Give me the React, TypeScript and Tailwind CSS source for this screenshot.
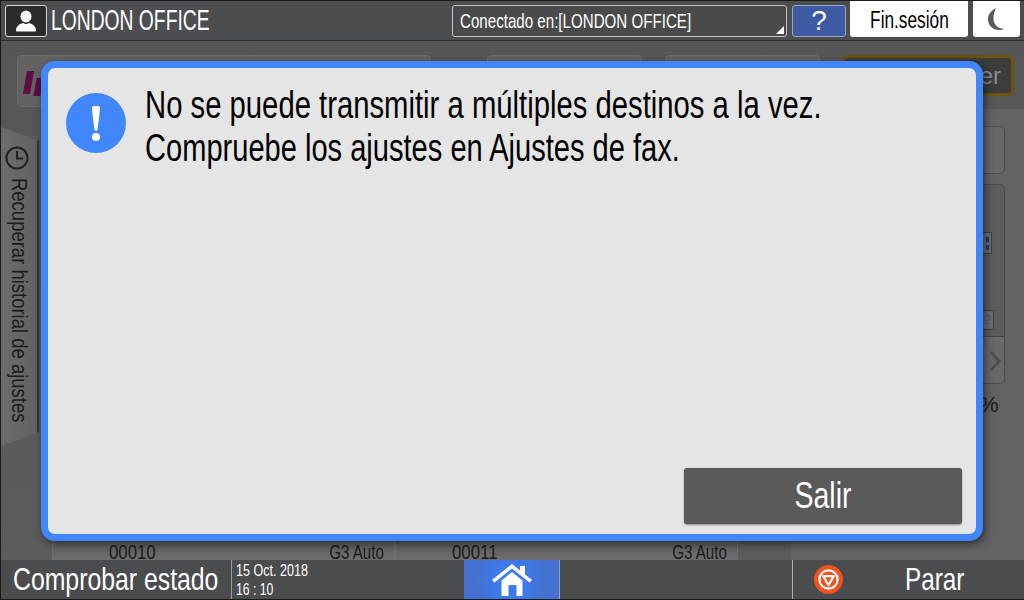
import React from "react";

const font = { fontFamily: '"Liberation Sans", Arial, sans-serif' };

function Ghost({ name, mode }: { name: string; mode: string }) {
  return (
    <div className="relative w-[343px] h-[28px] border-x border-[#6e6e6e] flex justify-between pl-[56px] pr-[10px] text-[21px] leading-[24px] text-[#1c1c1c] overflow-hidden bg-gradient-to-b from-[#565656] to-[#6e6e6e]">
      <div className="absolute left-[20px] top-0 w-[24px] h-[5px] bg-[#4a1030]" />
      <span className="inline-block origin-left scale-x-[0.8] pt-[8px]">{name}</span>
      <span className="inline-block origin-right scale-x-[0.72] pt-[8px]">{mode}</span>
    </div>
  );
}

export default function App() {
  return (
    <div style={font} className="relative w-[1024px] h-[600px] overflow-hidden bg-[#575757] flex flex-col border-y border-l border-[#1a1a1a]">
      {/* Header */}
      <header className="h-[40px] shrink-0 bg-[#4c4d4f] border-b border-[#2e2e2e] flex items-center pl-[4px] pr-[4px] relative">
        <div className="w-[42px] h-[32px] rounded-[3px] border border-[#d8d8d8] bg-[#2b2b2b] flex items-center justify-center">
          <svg viewBox="0 0 24 24" className="w-[24px] h-[24px]" fill="#fff">
            <ellipse cx="12" cy="7.500" rx="5.500" ry="6" />
            <path d="M2 21.500c0-4 3-6.500 7-7.500 2 1.200 4 1.200 6 0 4 1 7 3.500 7 7.500 0 .5-.4 1-1 1H3c-.6 0-1-.5-1-1z" />
          </svg>
        </div>
        <span className="ml-[4px] -mt-[2px] text-[29px] leading-[32px] text-white inline-block origin-left scale-x-[0.665] whitespace-nowrap">LONDON OFFICE</span>
        <div className="flex-1" />
        <div className="relative w-[335px] h-[32px] rounded-[3px] border border-[#c4c4c4] bg-[#4a4a4a] flex items-center pl-[7px]">
          <span className="text-[21px] text-white inline-block origin-left scale-x-[0.72] whitespace-nowrap">Conectado en:[LONDON OFFICE]</span>
          <div className="absolute right-[2px] bottom-[2px] w-0 h-0 border-l-[8px] border-l-transparent border-b-[8px] border-b-white" />
        </div>
        <div className="ml-[5px] w-[54px] h-[32px] rounded-[3px] border border-[#9aa6c4] bg-[#3d5aa3] flex items-center justify-center text-[28px] text-white">?</div>
        <div className="ml-[4px] w-[118px] h-[36px] -mt-[4px] pt-[4px] rounded-b-[3px] bg-white flex items-center justify-center text-[23px] text-black">
          <span className="inline-block scale-x-[0.75] whitespace-nowrap">Fin.sesión</span>
        </div>
        <div className="ml-[5px] w-[47px] h-[36px] -mt-[4px] rounded-b-[3px] bg-white flex items-center justify-center">
          <svg viewBox="0 0 16 22" className="w-[16px] h-[22px] -ml-[1px]" fill="#5a5a5a">
            <path d="M8 0C3 2.500 0 6.500 0 11.500 0 17.500 5 22 11 22c2 0 4-.4 5-1.200C10 21 5.500 16.500 5.500 10.500 5.500 6.500 6.500 3 8 0z" />
          </svg>
        </div>
      </header>

      {/* Dimmed underlying screen */}
      <main className="relative flex-1 min-h-0 bg-gradient-to-b from-[#565656] to-[#5c5c5c]">
        <div className="absolute left-[16px] top-[14px] w-[414px] h-[52px] rounded-[4px] border border-[#6a6a6a] bg-[#626262] overflow-hidden">
          <div className="absolute left-[7px] top-[15px] w-[7px] h-[23px] bg-[#5e0d45] skew-x-[-10deg]" />
          <div className="absolute left-[17px] top-[22px] w-[7px] h-[18px] bg-[#5e0d45] skew-x-[-10deg]" />
        </div>
        <div className="absolute left-[486px] top-[14px] w-[155px] h-[52px] rounded-[4px] border border-[#6a6a6a] bg-[#626262]" />
        <div className="absolute left-[664px] top-[14px] w-[155px] h-[52px] rounded-[4px] border border-[#6a6a6a] bg-[#626262]" />
        <div className="absolute left-[841px] top-[14px] w-[172px] h-[41px] rounded-[6px] border-[3px] border-[#6b5410] bg-[#3c3c3c] flex items-center justify-end pr-[10px] text-[24px] text-[#8a8a8a]">er</div>

        <div className="absolute left-[790px] top-[68px] right-0 bottom-0 bg-[#636363]" />
        <div className="absolute left-[960px] top-[85px] w-[44px] h-[48px] rounded-[5px] border border-[#4c4c4c] bg-[#686868]" />
        <div className="absolute left-[960px] top-[143px] w-[44px] h-[200px] rounded-[5px] border border-[#4c4c4c] bg-[#5c5c5c] overflow-hidden">
          <div className="absolute left-0 top-[47px] w-[30px] h-[22px] border border-[#444] bg-[#6c6c6c] flex flex-col items-end justify-center gap-[3px] pr-[2px]">
            <div className="w-[3px] h-[5px] bg-[#1c3e78]" />
            <div className="w-[3px] h-[5px] bg-[#1c3e78]" />
          </div>
          <div className="absolute left-0 top-[125px] w-[32px] h-[20px] border border-[#444] bg-[#6c6c6c] text-[12px] text-right text-[#3c5694] pr-[2px]">2</div>
          <div className="absolute left-0 right-0 top-[151px] h-[49px] border-t border-[#444] bg-[#686868] flex items-start justify-end pr-[2px] pt-[13px]">
            <svg viewBox="0 0 14 24" className="w-[13px] h-[22px]" fill="none" stroke="#4c4c4c" strokeWidth="3"><path d="M2 2l9 10L2 22" /></svg>
          </div>
        </div>
        <div className="absolute left-[978px] top-[347px] text-[22px] text-[#1c1c1c]">%</div>

        <div className="absolute left-[51px] bottom-0">
          <div className="flex"><Ghost name="00010" mode="G3 Auto" /><Ghost name="00011" mode="G3 Auto" /></div>
        </div>
        <div className="absolute left-[875px] top-[470px] w-[70px] h-[30px] rounded-full bg-[#1c1c1c]" />

        {/* History tab */}
        <div className="absolute left-0 top-[86px] w-[38px] h-[319px] bg-gradient-to-r from-[#6c6c6c] to-[#626262] border-r-2 border-[#333] [clip-path:polygon(0_0,100%_14px,100%_calc(100%-14px),0_100%)] flex flex-col items-center pt-[19px]">
          <svg viewBox="0 0 24 24" className="w-[24px] h-[24px] shrink-0 -ml-[4px]" fill="none" stroke="#222" strokeWidth="2">
            <circle cx="12" cy="12" r="10.500" />
            <path d="M12 5v7.500h6" />
          </svg>
          <span className="mt-[8px] -ml-[1px] text-[22px] leading-[24px] text-[#1c1c1c] whitespace-nowrap [writing-mode:vertical-rl] inline-block origin-top scale-y-[0.84]">Recuperar historial de ajustes</span>
        </div>
      </main>

      {/* Footer */}
      <footer className="h-[39px] shrink-0 bg-[#4b4c4e] flex items-stretch relative z-0">
        <div className="w-[231px] pl-[12px] flex items-center border-r border-[#9a9a9a] overflow-visible">
          <span className="-mt-[2px] text-[32px] text-white inline-block origin-left scale-x-[0.775] whitespace-nowrap">Comprobar estado</span>
        </div>
        <div className="w-[232px] pl-[4px] pt-[1px] text-[17px] leading-[19px] text-white">
          <div className="origin-left scale-x-[0.74] whitespace-nowrap">15 Oct. 2018</div>
          <div className="origin-left scale-x-[0.72] whitespace-nowrap">16 : 10</div>
        </div>
        <div className="w-[96px] bg-[radial-gradient(circle,#3a7cf5_0%,#3f78e8_35%,#4570cf_70%)] border-r border-[#8aa2d8] flex items-center justify-center">
          <svg viewBox="0 0 40 34" className="w-[40px] h-[34px]" fill="#fff">
            <path d="M20 1 0 17l2.500 2.500L20 5.500 37.500 19.500 40 17 33 11.500V3h-5v4.500z" />
            <path fillRule="evenodd" d="M9.500 17.500 20 9l10.500 8.500V33h-21zM16.500 22v11h8V22z" />
          </svg>
        </div>
        <div className="w-[233px] border-r border-[#b0b0b0]" />
        <div className="relative flex-1 flex items-center">
          <div className="ml-[21px] w-[29px] h-[29px] rounded-full bg-[#f4511e] flex items-center justify-center">
            <svg viewBox="0 0 24 24" className="w-[23px] h-[23px]" fill="none" stroke="#fff" strokeWidth="2.300" strokeLinejoin="round">
              <circle cx="12" cy="12" r="9.500" />
              <path d="M6.500 8.500h11L12 18z" />
            </svg>
          </div>
          <span className="absolute left-[112px] -mt-[2px] text-[32px] text-white inline-block origin-left scale-x-[0.76]">Parar</span>
        </div>
      </footer>

      {/* Dialog */}
      <div className="absolute left-[40px] top-[60px] w-[942px] h-[480px] rounded-[14px] border-[7px] border-[#4286fc] bg-[#e5e5e5] shadow-[2px_3px_8px_rgba(0,0,0,0.55)] flex flex-col pl-[18px] pr-[14px] pt-[25px] pb-[10px]">
        <div className="flex items-start">
          <div className="w-[60px] h-[60px] shrink-0 rounded-full bg-[#4286fc] flex items-center justify-center">
            <svg viewBox="0 0 12 36" className="w-[12px] h-[36px]" fill="#fff">
              <path d="M2 2c0-1.300 8-1.300 8 0 0 5-1.800 17-2.600 23-.2 1-2.600 1-2.800 0C3.800 19 2 7 2 2z" />
              <circle cx="6" cy="32" r="4" />
            </svg>
          </div>
          <div className="ml-[19px] -mt-[9px] text-[38px] leading-[43px] text-black whitespace-nowrap">
            <div className="origin-left scale-x-[0.77]">No se puede transmitir a múltiples destinos a la vez.</div>
            <div className="origin-left scale-x-[0.765]">Compruebe los ajustes en Ajustes de fax.</div>
          </div>
        </div>
        <div className="flex-1" />
        <div className="flex justify-end">
          <button className="w-[278px] h-[56px] rounded-[3px] bg-[#5a5a5a] shadow-[0_1px_2px_rgba(0,0,0,0.4)] text-white text-[37px] flex items-center justify-center">
            <span className="inline-block scale-x-[0.77]">Salir</span>
          </button>
        </div>
      </div>
    </div>
  );
}
